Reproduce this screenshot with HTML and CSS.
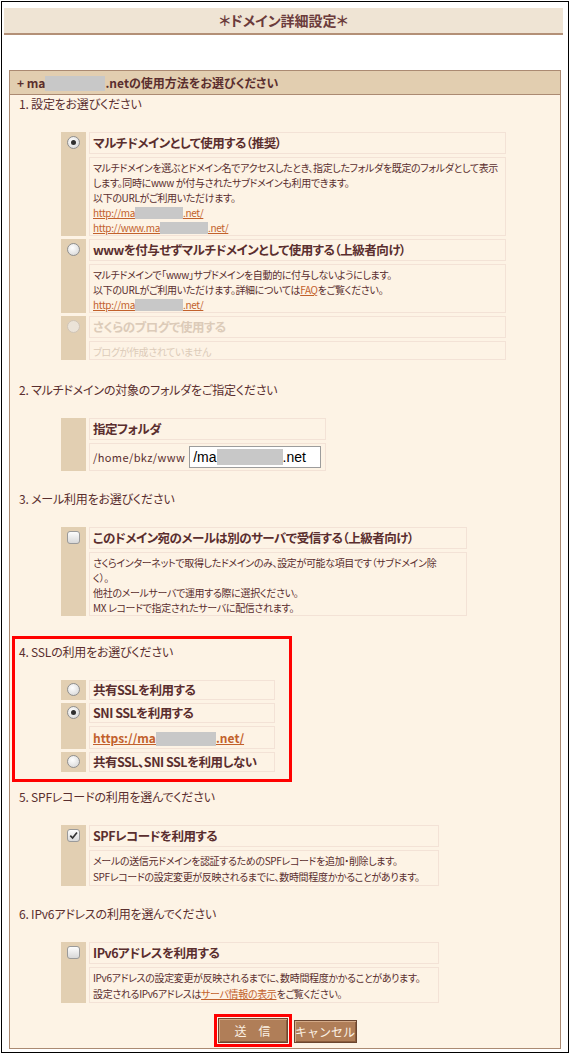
FILE: index.html
```html
<!DOCTYPE html>
<html lang="ja">
<head>
  <meta charset="UTF-8" />
  <title>ドメイン詳細設定</title>
  <link rel="stylesheet" href="styles.css">
</head>
<body>
<div class="frame">

  <div class="page-title">＊ドメイン詳細設定＊</div>

  <div class="panel">
    <div class="panel-head">+ ma<span class="mask mask-head"></span>.netの使用方法をお選びください</div>

    <div class="panel-body">

      <!-- 1 -->
      <div class="section first">
        <h3 class="sec-title">1. 設定をお選びください</h3>
        <div class="opts opts-main">
          <div class="mark rows-2"><span class="radio on"></span></div>
          <div class="opt-label">マルチドメインとして使用する（推奨）</div>
          <div class="opt-desc">
            マルチドメインを選ぶとドメイン名でアクセスしたとき、指定したフォルダを既定のフォルダとして表示<br>
            します。同時にwww が付与されたサブドメインも利用できます。<br>
            以下のURLがご利用いただけます。<br>
            <a href="#">http://ma<span class="mask mask-url"></span>.net/</a><br>
            <a href="#">http://www.ma<span class="mask mask-url"></span>.net/</a>
          </div>

          <div class="mark rows-2"><span class="radio"></span></div>
          <div class="opt-label">wwwを付与せずマルチドメインとして使用する（上級者向け）</div>
          <div class="opt-desc">
            マルチドメインで「www」サブドメインを自動的に付与しないようにします。<br>
            以下のURLがご利用いただけます。詳細については<a href="#">FAQ</a>をご覧ください。<br>
            <a href="#">http://ma<span class="mask mask-url"></span>.net/</a>
          </div>

          <div class="mark rows-2"><span class="radio off"></span></div>
          <div class="opt-label disabled">さくらのブログで使用する</div>
          <div class="opt-desc disabled">ブログが作成されていません</div>
        </div>
      </div>

      <!-- 2 -->
      <div class="section">
        <h3 class="sec-title">2. マルチドメインの対象のフォルダをご指定ください</h3>
        <div class="opts opts-folder">
          <div class="mark rows-2"></div>
          <div class="opt-label">指定フォルダ</div>
          <div class="opt-field">
            /home/bkz/www
            <span class="text-input">/ma<span class="mask mask-input"></span>.net</span>
          </div>
        </div>
      </div>

      <!-- 3 -->
      <div class="section">
        <h3 class="sec-title">3. メール利用をお選びください</h3>
        <div class="opts opts-mail">
          <div class="mark rows-2"><span class="check"></span></div>
          <div class="opt-label">このドメイン宛のメールは別のサーバで受信する（上級者向け）</div>
          <div class="opt-desc">
            さくらインターネットで取得したドメインのみ、設定が可能な項目です（サブドメイン除<br>
            く）。<br>
            他社のメールサーバで運用する際に選択ください。<br>
            MX レコードで指定されたサーバに配信されます。
          </div>
        </div>
      </div>

      <!-- 4 -->
      <div class="section marked">
        <h3 class="sec-title">4. SSLの利用をお選びください</h3>
        <div class="opts opts-ssl">
          <div class="mark"><span class="radio"></span></div>
          <div class="opt-label">共有SSLを利用する</div>

          <div class="mark rows-2"><span class="radio on"></span></div>
          <div class="opt-label">SNI SSLを利用する</div>
          <div class="opt-url"><a href="#">https://ma<span class="mask mask-ssl"></span>.net/</a></div>

          <div class="mark"><span class="radio"></span></div>
          <div class="opt-label">共有SSL、SNI SSLを利用しない</div>
        </div>
      </div>

      <!-- 5 -->
      <div class="section">
        <h3 class="sec-title">5. SPFレコードの利用を選んでください</h3>
        <div class="opts opts-note">
          <div class="mark rows-2">
            <span class="check on">
              <svg viewBox="0 0 12 12" width="11" height="11"><path d="M2.5 6.2 L5 8.8 L9.8 2.6" fill="none" stroke="#333" stroke-width="1.8"/></svg>
            </span>
          </div>
          <div class="opt-label">SPFレコードを利用する</div>
          <div class="opt-desc">
            メールの送信元ドメインを認証するためのSPFレコードを追加・削除します。<br>
            SPFレコードの設定変更が反映されるまでに、数時間程度かかることがあります。
          </div>
        </div>
      </div>

      <!-- 6 -->
      <div class="section last">
        <h3 class="sec-title">6. IPv6アドレスの利用を選んでください</h3>
        <div class="opts opts-note">
          <div class="mark rows-2"><span class="check"></span></div>
          <div class="opt-label">IPv6アドレスを利用する</div>
          <div class="opt-desc">
            IPv6アドレスの設定変更が反映されるまでに、数時間程度かかることがあります。<br>
            設定されるIPv6アドレスは<a href="#">サーバ情報の表示</a>をご覧ください。
          </div>
        </div>
      </div>

      <div class="actions">
        <span class="marked-btn"><button class="btn btn-send">送　信</button></span>
        <button class="btn btn-cancel">キャンセル</button>
      </div>

    </div>
  </div>

</div>
</body>
</html>
```

FILE: styles.css
```css
* {
  box-sizing: border-box;
}

body {
  margin: 0;
  background: #fff;
  font-family: "Noto Sans CJK JP", sans-serif;
  font-feature-settings: "palt";
  color: #5a2e2e;
}

.frame {
  margin: 1px;
  border: 1px solid #000;
  padding: 6px 5px 3px 2px;
}

.page-title {
  height: 27px;
  background: #efe4d4;
  border-bottom: 2px solid #b39077;
  text-align: center;
  font-size: 14px;
  font-weight: bold;
  line-height: 25px;
  color: #6b3b3b;
}

.panel {
  margin: 35px 2px 0 5px;
  border: 1px solid #ab8a72;
  background: #fdf3e5;
}

.panel-head {
  height: 24px;
  background: #e2ceb0;
  border-bottom: 1px solid #ab8a72;
  padding-left: 7px;
  font-size: 12px;
  font-weight: bold;
  line-height: 23px;
}

.mask {
  display: inline-block;
  background: #c8c8c8;
  vertical-align: middle;
}

.mask-head {
  width: 60px;
  height: 15px;
  margin-top: -2px;
}

.mask-url {
  width: 48px;
  height: 12px;
  margin-top: -2px;
}

.mask-ssl {
  width: 60px;
  height: 14px;
  margin-top: -2px;
}

.mask-input {
  width: 66px;
  height: 16px;
  margin-top: -2px;
}

/* sections */

.section {
  padding: 0 9px 20px;
}

.section.first {
  padding-top: 1px;
  padding-bottom: 22px;
}

.section.last {
  padding-bottom: 11px;
}

.sec-title {
  margin: 0 0 20px;
  font-size: 12px;
  font-weight: normal;
  line-height: 16px;
  letter-spacing: -0.2px;
}

.section.marked {
  margin: 0 268px 7px 2px;
  border: 3px solid #f00;
  padding: 5px 4px 7px;
}

/* option tables */

.opts {
  display: grid;
  grid-template-columns: 25px 1fr;
  gap: 3px;
  margin-left: 42px;
}

.opts-main { width: 445px; }
.opts-folder { width: 265px; }
.opts-mail { width: 406px; }
.opts-ssl { width: 214px; }
.opts-note { width: 378px; }

.mark {
  display: flex;
  justify-content: center;
  padding-top: 4px;
  background: #e2cfb2;
}

.mark.rows-2 {
  grid-row: span 2;
}

.opt-label,
.opt-desc,
.opt-url,
.opt-field {
  grid-column: 2;
  border: 1px solid #f3e2d6;
}

.opt-label {
  height: 22px;
  padding: 0 3px;
  font-size: 12.5px;
  font-weight: bold;
  line-height: 20px;
  letter-spacing: -0.5px;
  white-space: nowrap;
}

.opts-ssl .opt-label {
  height: 20px;
  line-height: 18px;
}

.opts-ssl .mark {
  padding-top: 3px;
}

.opt-desc {
  padding: 2px 3px 0;
  font-size: 10px;
  line-height: 15px;
  letter-spacing: -0.35px;
  white-space: nowrap;
}

.opts-note .opt-desc {
  line-height: 16px;
}

.opt-url {
  height: 23px;
  padding: 0 3px;
  font-size: 12px;
  font-weight: bold;
  line-height: 21px;
}

.opt-field {
  display: flex;
  align-items: center;
  gap: 4px;
  height: 28px;
  padding: 0 3px;
  font-size: 11px;
  letter-spacing: 0.4px;
}

.text-input {
  display: inline-block;
  width: 132px;
  height: 22px;
  padding: 0 3px;
  border: 1px solid #9c9c9c;
  background: #fff;
  color: #000;
  font-family: "Liberation Sans", Arial, sans-serif;
  font-size: 14px;
  line-height: 20px;
  letter-spacing: 0;
}

.disabled {
  color: #dccbb9;
}

a {
  color: #c2612c;
  text-decoration: underline;
}

/* radios and checkboxes */

.radio,
.check {
  display: inline-block;
  position: relative;
  width: 13px;
  height: 13px;
  border: 1px solid #8f8f8f;
  background: radial-gradient(circle at 40% 35%, #ffffff, #d2d2d2);
}

.radio {
  border-radius: 50%;
}

.radio.on::after {
  content: "";
  position: absolute;
  left: 3px;
  top: 3px;
  width: 5px;
  height: 5px;
  border-radius: 50%;
  background: #2f2f2f;
}

.radio.off {
  border-color: #d0c4b6;
  background: #ebe3d8;
}

.check {
  border-radius: 3px;
  border-color: #9a9a9a;
  background: linear-gradient(#fdfdfd, #d8d8d8);
}

.check svg {
  position: absolute;
  left: 0;
  top: 0;
}

/* buttons */

.actions {
  padding: 0 0 1px;
  text-align: center;
  font-size: 0;
}

.marked-btn {
  display: inline-block;
  border: 3px solid #f00;
  padding: 1px;
  vertical-align: bottom;
  margin-right: 2px;
}

.btn {
  font-family: "Noto Sans CJK JP", sans-serif;
  font-size: 12px;
  color: #fbf1e4;
  background: #b07e58;
  border: 1px solid #6b4630;
  box-shadow: inset 1px 1px 0 #d4aa88, inset -1px -1px 0 #8a5c3c;
  padding: 0;
  vertical-align: bottom;
}

.btn-send {
  width: 70px;
  height: 25px;
}

.btn-cancel {
  width: 63px;
  height: 23px;
  margin-bottom: 4px;
}
```
